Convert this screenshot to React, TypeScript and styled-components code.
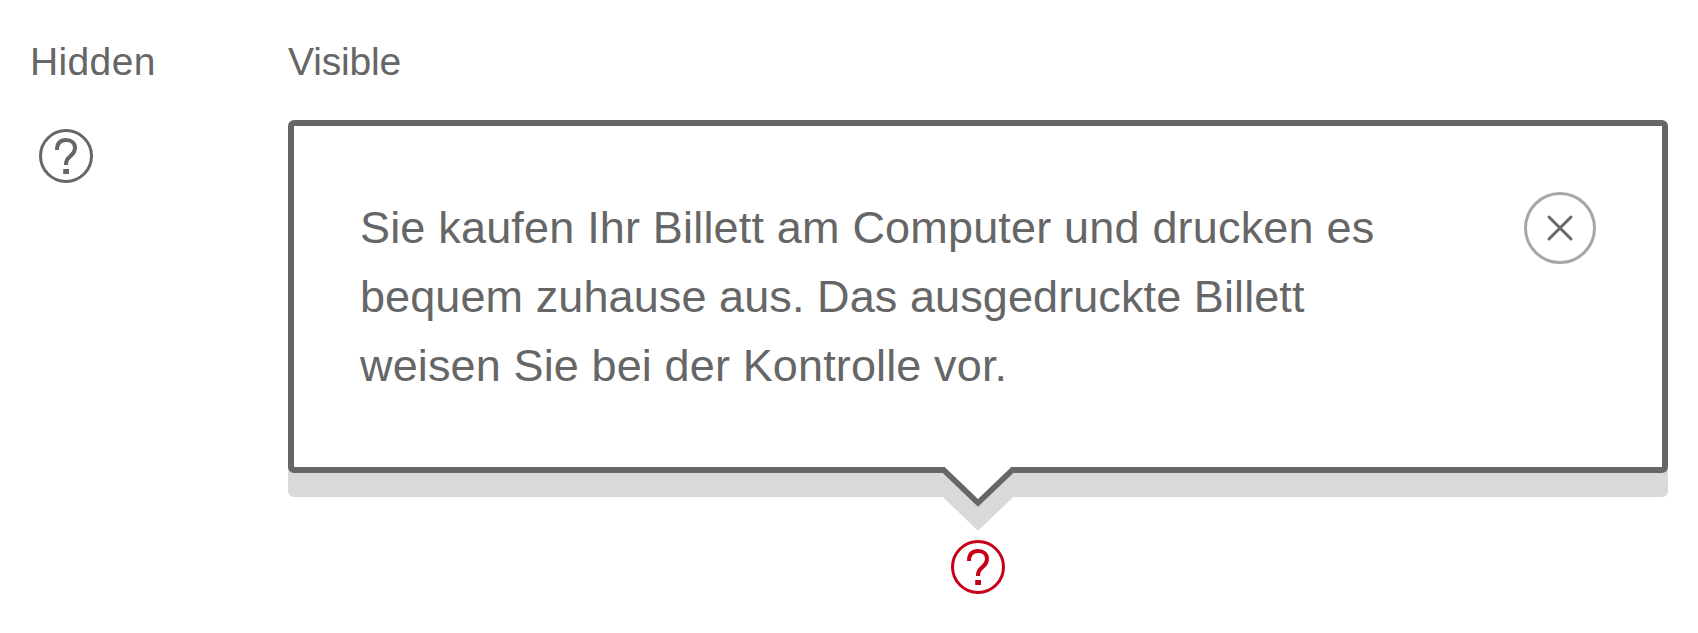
import React from "react";
import styled, { createGlobalStyle } from "styled-components";

const GlobalStyle = createGlobalStyle`
  body {
    margin: 0;
    background: #fff;
    color: #666;
    font-family: "Liberation Sans", Helvetica, Arial, sans-serif;
  }
`;

const Page = styled.main`
  box-sizing: border-box;
  display: grid;
  grid-template-columns: 258px 1380px;
  height: 633px;
  padding: 36px 30px 0;
  overflow: hidden;
`;

const Column = styled.section`
  display: flex;
  flex-direction: column;
`;

const Label = styled.h2<{ $tracking: string }>`
  margin: 0;
  height: 84px;
  font-size: 39px;
  font-weight: 400;
  line-height: 52px;
  letter-spacing: ${(p) => p.$tracking};
`;

const HelpButton = styled.button<{ $active?: boolean }>`
  display: block;
  width: 54px;
  height: 54px;
  padding: 0;
  border: 0;
  background: none;
  color: ${(p) => (p.$active ? "#c60018" : "#666")};
  margin: ${(p) => (p.$active ? "67px auto 0" : "9px 0 0 9px")};
`;

const Bubble = styled.div`
  position: relative;
  box-sizing: border-box;
  display: flex;
  justify-content: space-between;
  align-items: flex-start;
  height: 353px;
  padding: 66px;
  border: 6px solid #666;
  border-radius: 6px;
  background: #fff;
  box-shadow: 0 24px 0 #d9d9d9;
`;

const Message = styled.p`
  margin: 1px 0 0;
  font-size: 45px;
  line-height: 69px;
`;

const Line = styled.span<{ $tracking: string }>`
  display: block;
  white-space: nowrap;
  letter-spacing: ${(p) => p.$tracking};
`;

const CloseButton = styled.button`
  flex: none;
  width: 72px;
  height: 72px;
  padding: 0;
  border: 0;
  background: none;
`;

const Arrow = styled.svg`
  position: absolute;
  left: 644px;
  top: 320px;
  width: 80px;
  height: 90px;
`;

const Drawing = styled.svg`
  display: block;
`;

function HelpIcon() {
  return (
    <Drawing width="54" height="54" viewBox="0 0 54 54" fill="none" stroke="currentColor">
      <circle cx="27" cy="27" r="25.5" strokeWidth="3" />
      <path
        d="M18 21C18 14.4 21.2 11 27 11C32.5 11 36 14.2 36 18.9C36 22 34.6 24.3 31.8 26.8C28.4 29.8 27 31.2 27 36"
        strokeWidth="4"
      />
      <rect x="24.2" y="40" width="5.8" height="5" fill="currentColor" stroke="none" />
    </Drawing>
  );
}

export default function App() {
  return (
    <>
      <GlobalStyle />
      <Page>
        <Column>
          <Label $tracking="0.36px">Hidden</Label>
          <HelpButton aria-label="Hilfe">
            <HelpIcon />
          </HelpButton>
        </Column>
        <Column>
          <Label $tracking="-0.15px">Visible</Label>
          <Bubble role="tooltip">
            <Message>
              <Line $tracking="0.18px">Sie kaufen Ihr Billett am Computer und drucken es</Line>
              <Line $tracking="0.09px">bequem zuhause aus. Das ausgedruckte Billett</Line>
              <Line $tracking="0.13px">weisen Sie bei der Kontrolle vor.</Line>
            </Message>
            <CloseButton aria-label="Schliessen">
              <Drawing width="72" height="72" viewBox="0 0 72 72" fill="none">
                <circle cx="36" cy="36" r="34.5" stroke="#a6a6a6" strokeWidth="3" />
                <path d="M25 25L47 47M47 25L25 47" stroke="#666" strokeWidth="3" strokeLinecap="round" />
              </Drawing>
            </CloseButton>
            <Arrow viewBox="0 0 80 90">
              <path d="M4.7 27V51L40 84.8L75.3 51V27Z" fill="#d9d9d9" />
              <path d="M4.7 27L40 60.8L75.3 27L73.3 21H6.7Z" fill="#666" />
              <path d="M6.7 21L40 53L73.3 21V19H6.7Z" fill="#fff" />
            </Arrow>
          </Bubble>
          <HelpButton $active aria-label="Hilfe">
            <HelpIcon />
          </HelpButton>
        </Column>
      </Page>
    </>
  );
}
